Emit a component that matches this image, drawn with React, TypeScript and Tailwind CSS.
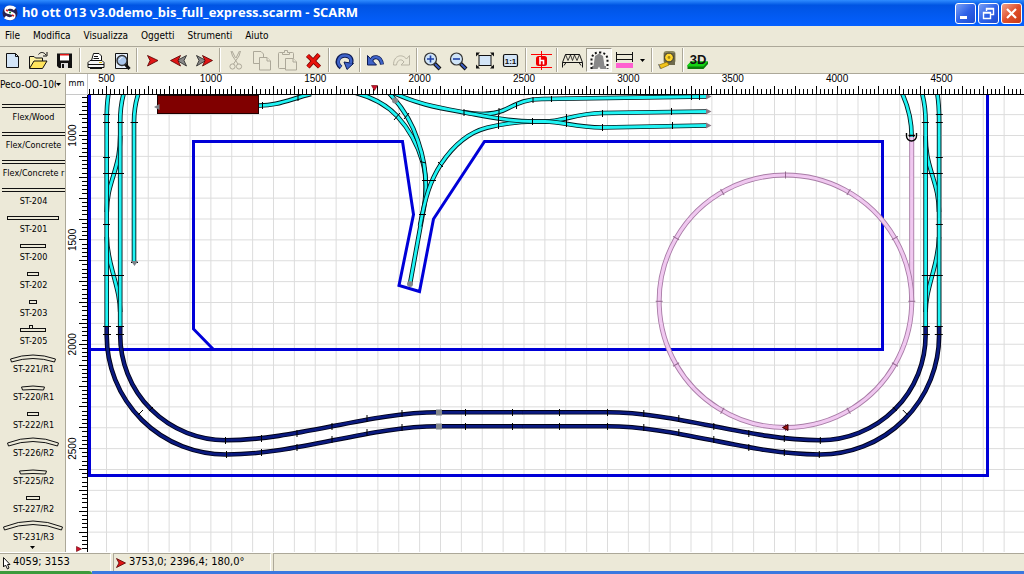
import type { ReactNode } from 'react'

const MENUS = ['File', 'Modifica', 'Visualizza', 'Oggetti', 'Strumenti', 'Aiuto']

const uiFont = "font-['DejaVu_Sans_Condensed','DejaVu_Sans',sans-serif]"

// Screen position of 500 mm (x) and 1000 mm (y), and the size of 100 mm
const X500 = 106.5
const Y1000 = 135.5
const STEP = 20.875

// The track plan is mirrored around the middle of the layout
const MIRROR = 'translate(1045.8 0) scale(-1 1)'

type Part = { name: string; width: number; kind: 'flex' | 'straight' | 'knob' | 'curve'; rise?: number }

const PARTS: Part[] = [
  { name: 'Flex/Wood', width: 63, kind: 'flex' },
  { name: 'Flex/Concrete', width: 63, kind: 'flex' },
  { name: 'Flex/Concrete r', width: 63, kind: 'flex' },
  { name: 'ST-204', width: 63, kind: 'flex' },
  { name: 'ST-201', width: 51, kind: 'straight' },
  { name: 'ST-200', width: 25, kind: 'straight' },
  { name: 'ST-202', width: 11, kind: 'straight' },
  { name: 'ST-203', width: 7, kind: 'straight' },
  { name: 'ST-205', width: 25, kind: 'knob' },
  { name: 'ST-221/R1', width: 45, kind: 'curve', rise: 5 },
  { name: 'ST-220/R1', width: 23, kind: 'curve', rise: 2 },
  { name: 'ST-222/R1', width: 11, kind: 'straight' },
  { name: 'ST-226/R2', width: 51, kind: 'curve', rise: 6 },
  { name: 'ST-225/R2', width: 27, kind: 'curve', rise: 2 },
  { name: 'ST-227/R2', width: 13, kind: 'straight' },
  { name: 'ST-231/R3', width: 59, kind: 'curve', rise: 7 },
]

function PartShape({ part }: { part: Part }) {
  const l = 33 - part.width / 2
  const r = 33 + part.width / 2
  const rise = part.rise ?? 0
  const top = 12 - rise
  return (
    <svg viewBox="0 0 66 16" className="block h-4 w-[66px]" fill="none" stroke="#111" shapeRendering="crispEdges">
      {part.kind === 'flex' && <path d="M2 9.5H66M2 12.5H66" />}
      {(part.kind === 'straight' || part.kind === 'knob') && <rect x={l} y="9.5" width={part.width} height="3" />}
      {part.kind === 'knob' && <path d="M29.5 9.5V6.5H32.5V9.5" />}
      {part.kind === 'curve' && (
        <path
          shapeRendering="auto"
          d={`M${l} 12Q33 ${top - rise + 2} ${r} 12L${r - 1} 15Q33 ${top - rise + 6} ${l + 1} 15Z`}
        />
      )}
    </svg>
  )
}

function Tool({ label, children, pressed }: { label: string; children: ReactNode; pressed?: boolean }) {
  return (
    <button
      type="button"
      aria-label={label}
      title={label}
      className={
        pressed
          ? 'h-6 w-[26px] shrink-0 border border-[#9d9a8b] border-r-white border-b-white bg-[#f8f7f2]'
          : 'h-6 w-[26px] shrink-0'
      }
    >
      <svg viewBox="1 0 26 24" className={pressed ? '-m-px block h-6 w-[26px]' : 'block h-6 w-[26px]'} fill="none">
        {children}
      </svg>
    </button>
  )
}

function Separator() {
  return (
    <div className="flex h-6 w-[5px] shrink-0 pl-px">
      <div className="w-0.5 border-r border-l border-r-white border-l-[#aca899]" />
    </div>
  )
}

function Magnifier({ plus }: { plus?: boolean }) {
  return (
    <>
      <path d="M15.5 15.5L21 21" stroke="#111" strokeWidth="4" />
      <path d="M16 16L20.5 20.5" stroke="#3d5fc4" strokeWidth="1.8" />
      <circle cx="11.5" cy="11" r="6" fill="#cfe4f8" stroke="#333" strokeWidth="1.2" />
      <path d={plus ? 'M8 11H15M11.5 7.5V14.5' : 'M8 11H15'} stroke="#1d3fa8" strokeWidth="1.6" />
    </>
  )
}

function Toolbar() {
  return (
    <div role="toolbar" className="flex h-[27px] items-center overflow-hidden border-b border-[#aca899] bg-[#ece9d8]">
      <Tool label="Nuovo">
        <path d="M7.5 5.5H16.5L19.5 8.5V19.5H7.5Z" fill="#d3e5f7" stroke="#111" />
        <path d="M16.5 5.5V8.5H19.5" stroke="#111" />
      </Tool>
      <Tool label="Apri">
        <path d="M4.5 20V8.5H9L10.5 10H17.5V13" fill="#fff3a0" stroke="#111" />
        <path d="M4.5 20.5L9 13H22L17.5 20.5Z" fill="#ffe45c" stroke="#111" />
        <path d="M13.5 6.5C15.5 3.5 19 4 21 7M22 4V8H18" stroke="#111" />
      </Tool>
      <Tool label="Salva">
        <path d="M6 5.5H21V20H8L6 18Z" fill="#111" />
        <path d="M9 6H18V12.5H9Z" fill="#fff" />
        <path d="M9 6H18V7.5H9Z" fill="#e01515" />
        <path d="M10 15H17V20H10Z" fill="#ddd" />
        <path d="M11 16H13V20H11Z" fill="#111" />
      </Tool>
      <Separator />
      <Tool label="Stampa">
        <path d="M9.5 12.5L11.5 5.5H17L19.5 8V12.5Z" fill="#fff" stroke="#111" />
        <path d="M12 8.5H16M11.5 10.5H17" stroke="#111" />
        <path d="M8 12.5H20L22 14.5V19.5H6V14.5Z" fill="#f4f4f4" stroke="#111" />
        <path d="M6 16.5H22M8 20.5H20" stroke="#111" />
        <path d="M17 14.5H20" stroke="#d8b400" />
      </Tool>
      <Tool label="Anteprima di stampa">
        <path d="M7.5 5.5H19.5V20.5H7.5Z" fill="#e4eefa" stroke="#111" />
        <path d="M17 16L21.5 21" stroke="#111" strokeWidth="3" />
        <circle cx="14" cy="12.5" r="5" fill="#a9c6ec" stroke="#333" strokeWidth="1.4" />
        <path d="M11.5 12C12 10.5 13 9.5 14.5 9.5" stroke="#fff" />
      </Tool>
      <Separator />
      <Tool label="Punto iniziale">
        <path d="M8.5 7.5L19 12.5L8.5 18L11 12.5Z" fill="#e01515" stroke="#500" strokeWidth=".8" />
      </Tool>
      <Tool label="Indietro">
        <path d="M21.5 7.5L12 12.5L21.5 18L19 12.5Z" fill="#888" stroke="#222" strokeWidth=".8" />
        <path d="M15.5 7.5L5.5 12.5L15.5 18L13 12.5Z" fill="#e01515" stroke="#500" strokeWidth=".8" />
      </Tool>
      <Tool label="Avanti">
        <path d="M5.5 7.5L15 12.5L5.5 18L8 12.5Z" fill="#888" stroke="#222" strokeWidth=".8" />
        <path d="M11.5 7.5L21.5 12.5L11.5 18L14 12.5Z" fill="#e01515" stroke="#500" strokeWidth=".8" />
      </Tool>
      <Separator />
      <Tool label="Taglia">
        <g stroke="#aca899">
          <path d="M9 3L10.5 8L16 16M18.5 3L17 8L11.5 16M10 3L13.5 10M17.5 3L14 10" />
          <circle cx="10.5" cy="18.5" r="2.6" />
          <circle cx="17" cy="18.5" r="2.6" />
        </g>
      </Tool>
      <Tool label="Copia">
        <g fill="#ece9d8" stroke="#aca899">
          <path d="M5.5 3.5H13L15.5 6V15.5H5.5Z" />
          <path d="M11.5 9.5H19L22.5 13V22H11.5Z" />
          <path d="M19 9.5V13H22.5" />
        </g>
      </Tool>
      <Tool label="Incolla">
        <g fill="#ece9d8" stroke="#aca899">
          <rect x="4.5" y="4.5" width="15" height="16" rx="1" />
          <path d="M8.5 6.5V4.5H10.5V2.5H13.5V4.5H15.5V6.5Z" />
          <path d="M11.5 10.5H19L22.5 14V22H11.5Z" />
          <path d="M19 10.5V14H22.5" />
        </g>
      </Tool>
      <Tool label="Elimina">
        <path d="M7.5 7.5L19.5 19M19 6.5L8 19" stroke="#6b0000" strokeWidth="4.4" />
        <path d="M7.5 7.5L19.5 19M19 6.5L8 19" stroke="#e8120c" strokeWidth="3" />
      </Tool>
      <Separator />
      <Tool label="Ruota">
        <path d="M10 19.5C4 15 7 7.5 14 7.5C20 7.5 21.5 12 19.5 16" stroke="#0d1b52" strokeWidth="4.4" />
        <path d="M13 14L22.5 15.5L16 21.5Z" fill="#3f63c8" stroke="#0d1b52" />
        <path d="M10 19C5 15 7.5 7.5 14 7.5C19.5 7.5 21 12 19.5 15.5" stroke="#3f63c8" strokeWidth="2.6" />
      </Tool>
      <Separator />
      <Tool label="Annulla">
        <path d="M9 13C11 7.5 18.5 7.5 20 16.5" stroke="#0d1b52" strokeWidth="4" />
        <path d="M5.5 7.5V17H14.5Z" fill="#3f63c8" stroke="#0d1b52" />
        <path d="M9 13C11 7.5 18.5 7.5 20 16" stroke="#3f63c8" strokeWidth="2.4" />
      </Tool>
      <Tool label="Ripristina">
        <path d="M21.5 7.5V17H13L16 14C13.5 10 9 12 8.5 17H5.5C5.5 7 14.5 5.5 18.5 11Z" stroke="#b8b4a4" />
      </Tool>
      <Separator />
      <Tool label="Ingrandisci">
        <Magnifier plus />
      </Tool>
      <Tool label="Riduci">
        <Magnifier />
      </Tool>
      <Tool label="Adatta alla finestra">
        <rect x="8" y="7.5" width="12" height="10" fill="#d3e5f7" stroke="#111" />
        <path d="M5 4.5H9L5 8.5ZM23 4.5H19L23 8.5ZM5 20.5H9L5 16.5ZM23 20.5H19L23 16.5Z" fill="#111" />
        <path d="M6 5.5L8 7.5M22 5.5L20 7.5M6 19.5L8 17.5M22 19.5L20 17.5" stroke="#111" />
      </Tool>
      <Tool label="Scala 1:1">
        <rect x="6.5" y="6.5" width="14" height="12" rx="1.5" fill="#d3e5f7" stroke="#111" strokeWidth="1.2" />
        <text x="13.5" y="15.5" textAnchor="middle" fill="#111" className="font-['Liberation_Sans',sans-serif] text-[8px] font-bold">
          1:1
        </text>
      </Tool>
      <Separator />
      <Tool label="Altezze">
        <path d="M3 6.5H24M3 19.5H24M13.5 3V22" stroke="#ff0000" />
        <rect x="8" y="8" width="11" height="10" rx="2.5" fill="#f00000" />
        <path d="M12 9V16.5M12 12.5H15.5V16.5" stroke="#fff" strokeWidth="1.6" />
      </Tool>
      <Separator />
      <Tool label="Ponte">
        <path d="M6.5 6.5H20.5M3.5 14.5H23.5M6.5 6.5L3.5 14.5V19.5M20.5 6.5L23.5 14.5V19.5M5 17.5L7 14.5M22 17.5L20 14.5" stroke="#111" />
        <path d="M6.5 6.5L9 12.5L11.5 7L13.5 12.5L15.5 7L18 12.5L20.5 6.5" stroke="#111" strokeWidth=".8" />
      </Tool>
      <Tool label="Galleria" pressed>
        <path d="M10 8L14 5.5L18 8L19.5 18H21V21H15.5L14 18.5L12.5 21H7V18H8.5Z" fill="#888" />
        <path d="M6.5 21V10C8 6 10.5 4.5 14.5 4.5C18.5 4.5 21 6 22.5 10V21" stroke="#111" strokeWidth="2" strokeDasharray="2 2.2" />
      </Tool>
      <Tool label="Stile binari">
        <path d="M5 6.5H22M5 11.5H22M5.5 4V14M21.5 4V14" stroke="#111" />
        <rect x="5" y="15" width="17" height="5" fill="#ff5fd0" />
      </Tool>
      <button type="button" aria-label="Scegli stile" className="flex h-6 w-3 shrink-0 items-center px-0.5">
        <svg viewBox="0 0 5 3" className="h-[3px] w-[5px]">
          <path d="M0 0H5L2.5 3Z" fill="#000" />
        </svg>
      </button>
      <Separator />
      <Tool label="Misura">
        <rect x="9.5" y="3" width="12" height="12.5" rx="3" fill="#8d8a62" />
        <path d="M10 5V14L14 17H21V5" fill="#6e6a4c" />
        <circle cx="15" cy="9.5" r="4.4" fill="#ffd62e" stroke="#333" />
        <circle cx="15" cy="9.5" r="1.4" fill="#a88a10" />
        <path d="M5 17L13 14L15 17L7 20.5Z" fill="#f2c41c" stroke="#8a6c00" strokeWidth=".7" />
        <path d="M4.5 16L6.5 21" stroke="#777" />
      </Tool>
      <Separator />
      <Tool label="Vista 3D">
        <path d="M2.5 17.5L6 13.5H23V16L18.5 21H2.5Z" fill="#0b7a0b" />
        <path d="M2.5 17L6 13.5H23L18.5 18.5H2.5Z" fill="#13d313" />
        <text x="13" y="15.5" textAnchor="middle" fill="#111" className="font-['Liberation_Sans',sans-serif] text-[13px] font-bold">
          3D
        </text>
      </Tool>
    </div>
  )
}

const ticks = (count: number, from: number) =>
  Array.from({ length: count }, (_, i) => ({ at: from + (i * STEP) / 5, major: i % 5 === 0 }))

function TopRuler() {
  return (
    <svg className="block h-[21px] w-full bg-white" aria-hidden="true">
      <g transform="translate(-88 -74)">
        <g stroke="#000" shapeRendering="crispEdges">
          {ticks(400, X500 - STEP).map((t) => (
            <path key={t.at} d={`M${t.at} ${t.major ? 86 : 89}V94`} />
          ))}
          <path d="M88 94.5H4000" />
        </g>
        <g textAnchor="middle" className="font-['Liberation_Sans',sans-serif] text-[10px]">
          {Array.from({ length: 9 }, (_, i) => (
            <text key={i} x={X500 + i * 5 * STEP} y="82">
              {500 + i * 500}
            </text>
          ))}
        </g>
        <path d="M371.5 85.5H377.5L374.5 90.5Z" fill="#d0102c" stroke="#600" strokeWidth=".6" />
      </g>
    </svg>
  )
}

function SideRuler() {
  return (
    <svg className="block h-full min-h-0 w-[22px] bg-white" aria-hidden="true">
      <g transform="translate(-66 -95)">
        <g stroke="#000" shapeRendering="crispEdges">
          {ticks(400, Y1000 - 2 * STEP).map((t) => (
            <path key={t.at} d={`M${t.major ? 79 : 82} ${t.at}H88`} />
          ))}
          <path d="M87.5 95V3000" />
        </g>
        <g textAnchor="middle" className="font-['Liberation_Sans',sans-serif] text-[10px]">
          {Array.from({ length: 4 }, (_, i) => {
            const y = Y1000 + i * 5 * STEP
            return (
              <text key={i} x="76" y={y} transform={`rotate(-90 76 ${y})`}>
                {1000 + i * 500}
              </text>
            )
          })}
        </g>
        <path d="M76.5 546.5V551.5L81.5 549Z" fill="#d0102c" stroke="#600" strokeWidth=".6" />
      </g>
    </svg>
  )
}

function Track({ d, color = 'cyan' }: { d: string; color?: 'cyan' | 'navy' | 'pink' }) {
  const edge = color === 'pink' ? '#a87ca6' : color === 'navy' ? '#000016' : '#00181c'
  const fill = color === 'pink' ? '#f0c8f0' : color === 'navy' ? '#0a1a80' : '#20f4f4'
  return (
    <g fill="none">
      <path d={d} stroke={edge} strokeWidth={color === 'pink' ? 5 : 4.6} />
      <path d={d} stroke={fill} strokeWidth={color === 'pink' ? 3.2 : 2.8} />
    </g>
  )
}

function SideTracks() {
  return (
    <>
      <Track d="M120.2 136C120 152 118 160 114.5 172C110 187 107 195 106.8 212" />
      <Track d="M106.8 237C107 252 110 262 113.5 275C118 292 120 300 120.2 312" />
      <Track d="M108.6 93C107 102 106.7 110 106.7 120V327" />
      <Track d="M123.8 93C121 103 120.2 112 120.2 122V327" />
      <Track color="navy" d="M106.7 326V335.5A119 119 0 0 0 226.7 454.5C298 454.5 368 426.3 438.7 426.3H523" />
      <Track color="navy" d="M120.2 326V335A105.2 105.2 0 0 0 225.7 440.2C296 440.2 368 412.3 438.7 412.3H523" />
      <path
        stroke="#000"
        d="M103 114.5H110M103 122.5H110M103 157.5H110M103 173.5H124M103 224.5H110M103 275.5H124M117 122.5H124M103 326.5H111M116 326.5H124M103 334.5H111M116 334.5H124M225.5 437V444M226.5 451V458M261.5 435V442M261.5 449V456M297 430V437M297 444V451M332 423V430M332 436V443M367 415V422M367 429V436M402 410V417M402 424V431M149 411L153 407M138 415L143 410"
      />
    </>
  )
}

function TrackPlan() {
  const circleTicks = Array.from({ length: 12 }, (_, i) => i * 30)
  return (
    <svg className="block h-full min-h-0 w-full bg-white" role="img" aria-label="Tracciato">
      <defs>
        <pattern id="grid" x={X500 - 0.5} y={Y1000 - 0.5} width={STEP} height={STEP} patternUnits="userSpaceOnUse">
          <path d={`M0 .5H${STEP}M.5 0V${STEP}`} stroke="#dcdcdc" fill="none" />
        </pattern>
      </defs>
      <g transform="translate(-88 -95)">
        <rect x="88" y="95" width="4000" height="3000" fill="url(#grid)" />

        {/* Baseboard outline */}
        <g fill="none" stroke="#0000d8" strokeWidth="3">
          <path d="M89.5 90V475.5H987.5V90M89.5 349.5H882.5V141.5H484.5L433.5 219L419.5 291.5L399 285.5L413.5 214.5L402.5 141.5H193.5V329L213.5 349.5" />
        </g>

        {/* Programme loop */}
        <Track color="pink" d="M911.7 136V301" />
        <Track color="pink" d="M785.5 175A126.3 126.3 0 1 1 785.4 175Z" />
        {circleTicks.map((a) => (
          <path key={a} d="M785.5 171.5V178.5" stroke="#93688f" transform={`rotate(${a} 785.5 301.3)`} />
        ))}
        <path d="M788 424.5V430.5L782.5 427.5Z" fill="#a01010" stroke="#300" />

        <SideTracks />
        <g transform={MIRROR}>
          <SideTracks />
        </g>
        <path
          stroke="#000"
          d="M465.5 409V416M465.5 423V430M512.5 409V416M512.5 423V430M559.5 409V416M559.5 423V430M607.5 409V416M607.5 423V430"
        />

        {/* Siding on the left and its twin on the right */}
        <Track d="M138.5 93C135 104 134 112 134 122V263" />
        <path d="M130.5 122.5H138M131 262.5H138" stroke="#000" />
        <path d="M131 261H138L134.5 266Z" fill="#7c8288" />
        <Track d="M902 93C908 106 911.7 118 911.7 137" />
        <path d="M906.5 133V136A5 5 0 0 0 916.5 136V133M908.5 135.5H915" fill="none" stroke="#000" strokeWidth="1.4" />

        {/* Shed */}
        <Track d="M258 105.5C276 106 288 100 311 94" />
        <path d="M262.5 102V109M298 95V101" stroke="#000" />
        <rect x="157.5" y="95.5" width="101" height="18" fill="#800000" stroke="#200000" />
        <path d="M159.5 104V110L154 107Z" fill="#7c8288" />

        {/* Yard throat */}
        <Track d="M356 93C371 97 385 103 397.3 116.3C408 128 417 143 422.7 162C427 178 427 194 422.5 215L410 284" />
        <Track d="M387 91C403 107 412 122 418 141C424 158 427 177 425.5 197" />
        <Track d="M420 226C425 198 430 181 441 164C455 143 470 132 487 127.7C500 124.5 516 121.5 534 121.5" />
        <Track d="M464 112.3C480 115 492 115 503 110.5C514 106 522 99 542 99L707 96.5" />
        <Track d="M390 91C415 104 440 108 464 112.3C484 116 505 121.5 534 121.5H545C563 121.5 575 113.5 602 113L707 111.5" />
        <Track d="M534 121.5H545C563 121.5 575 127.5 602 127.5L707 125.5" />
        <path
          stroke="#000"
          d="M394 120L400 113M404 119L409 113M420 161.5L426 163M422 180.5H436M438 162L443 167M419 214.5H426M464 109V116M498.5 115V122M499 108V115M498.5 122V129M516.5 103V109M533 97V103M532.5 118V125M551.5 96V102M566.5 114V121M566.5 120V127M602.5 110V117M602.5 124V131M671.5 108V115M672.5 122V129M691.5 95V100M699.5 95V100"
        />
        <path d="M706 93.5V99.5L711.5 96.5ZM706 108.5V114.5L711.5 111.5ZM706 122.5V128.5L711.5 125.5Z" fill="#8a7a84" />
        <g fill="#84888c">
          <circle cx="395" cy="100.5" r="3" />
          <circle cx="410" cy="284" r="3" />
          <rect x="436" y="409.5" width="6" height="6" />
          <rect x="436" y="423.5" width="6" height="6" />
        </g>
      </g>
    </svg>
  )
}

const winButton =
  'flex h-[21px] w-[21px] items-center justify-center rounded-[3px] border border-white bg-linear-to-br from-[#7b9ff4] via-[#2f62e8] to-[#1d4bd0]'

export default function App() {
  return (
    <div className={`flex h-screen flex-col overflow-hidden bg-[#ece9d8] text-black ${uiFont}`}>
      <header className="flex h-[26px] shrink-0 items-center gap-1 bg-linear-to-b from-[#2f8cff] via-[#0054e3] via-20% to-[#0560ff] pr-0.5 pl-0.5">
        <svg viewBox="0 0 16 16" className="h-4 w-4" aria-hidden="true">
          <circle cx="8" cy="8" r="7.5" fill="#2b2350" />
          <path d="M13 4C10 1 3.5 1.5 4 5.5C4.5 8.5 12 7 12 10.5C12 14.5 6 14.5 3 12" fill="none" stroke="#fff" strokeWidth="3.2" />
          <path d="M4 5L6 6M10 10L12 11" stroke="#d82020" strokeWidth="1.6" />
          <path d="M7 7.5H9" stroke="#18a018" strokeWidth="1.6" />
        </svg>
        <h1 className="flex-1 truncate font-['Open_Sans',sans-serif] text-[13px] font-bold text-white">
          h0 ott 013 v3.0demo_bis_full_express.scarm - SCARM
        </h1>
        <div className="flex gap-0.5">
          <button type="button" aria-label="Riduci a icona" className={winButton}>
            <svg viewBox="0 0 19 19" className="h-[19px] w-[19px]">
              <rect x="4" y="12" width="7" height="3" fill="#fff" />
            </svg>
          </button>
          <button type="button" aria-label="Ripristina" className={winButton}>
            <svg viewBox="0 0 19 19" className="h-[19px] w-[19px]" fill="none" stroke="#fff">
              <path d="M7.5 7V4.5H14.5V10.5H12M7 5H15" strokeWidth="1.4" />
              <path d="M4.5 8.5H11.5V14.5H4.5ZM4 9H12" strokeWidth="1.4" />
            </svg>
          </button>
          <button
            type="button"
            aria-label="Chiudi"
            className="flex h-[21px] w-[21px] items-center justify-center rounded-[3px] border border-white bg-linear-to-br from-[#f0a088] via-[#e0502c] to-[#c83a14]"
          >
            <svg viewBox="0 0 19 19" className="h-[19px] w-[19px]">
              <path d="M5 5L14 14M14 5L5 14" stroke="#fff" strokeWidth="2.2" />
            </svg>
          </button>
        </div>
      </header>

      <nav className="flex h-[21px] shrink-0 items-center gap-[13px] border-b border-[#aca899] px-[5px] text-[10px]">
        {MENUS.map((m) => (
          <button key={m} type="button" className="leading-4">
            {m}
          </button>
        ))}
      </nav>

      <Toolbar />

      <main className="grid min-h-0 flex-1 grid-cols-[66px_22px_minmax(0,1fr)] grid-rows-[21px_minmax(0,1fr)]">
        <div className="flex items-center border-r border-[#aca899]">
          <select
            aria-label="Libreria"
            className="w-14 appearance-none overflow-hidden bg-transparent text-[10px] text-clip whitespace-nowrap outline-none"
          >
            <option>Peco-OO-100</option>
          </select>
          <svg viewBox="0 0 5 3" className="h-[3px] w-[5px]" aria-hidden="true">
            <path d="M0 0H5L2.5 3Z" fill="#000" />
          </svg>
        </div>
        <div className="flex items-center justify-center border-r border-b border-r-[#c8c8c8] border-b-[#c8c8c8] bg-white text-[9px]">mm</div>
        <TopRuler />

        <aside className="flex min-h-0 flex-col border-r border-[#aca899]">
          <div className="min-h-0 flex-1 overflow-hidden">
            {PARTS.map((part) => (
              <button key={part.name} type="button" className="block h-7 w-full overflow-hidden">
                <PartShape part={part} />
                <span className="block h-3 overflow-hidden pl-0.5 text-center text-[9px] leading-3 whitespace-nowrap">
                  {part.name}
                </span>
              </button>
            ))}
          </div>
          <button type="button" aria-label="Scorri in basso" className="flex h-2.5 shrink-0 items-center justify-center">
            <svg viewBox="0 0 5 3" className="h-[3px] w-[5px]">
              <path d="M0 0H5L2.5 3Z" fill="#000" />
            </svg>
          </button>
        </aside>
        <SideRuler />
        <TrackPlan />
      </main>

      <footer className="shrink-0">
        <div className="flex h-[19px] gap-0.5 border-t border-white text-[11px]">
          <div className="flex w-[111px] items-center gap-0.5 border-t border-r border-t-[#aca899] border-r-white pl-0.5">
            <svg viewBox="0 0 9 14" className="h-3.5 w-[9px]" aria-hidden="true">
              <path d="M1.5 1.5V11L3.5 9L5.5 13L7 12L5.5 8.5H8Z" fill="#fff" stroke="#111" />
            </svg>
            <span>4059; 3153</span>
          </div>
          <div className="flex w-[158px] items-center gap-[3px] border-t border-r border-l border-t-[#aca899] border-r-white border-l-[#aca899] pl-0.5">
            <svg viewBox="0 0 10 10" className="h-2.5 w-2.5" aria-hidden="true">
              <path d="M.5 .5L9.5 5L.5 9.5L3 5Z" fill="#e01515" stroke="#500" strokeWidth=".8" />
            </svg>
            <span>3753,0; 2396,4; 180,0°</span>
          </div>
          <div className="flex-1 border-t border-l border-[#aca899]" />
        </div>
        <div className="flex h-[3px]">
          <div className="w-[92px] rounded-tr bg-[#3c9a3c]" />
          <div className="flex-1 bg-[#3a78e0]" />
        </div>
      </footer>
    </div>
  )
}
